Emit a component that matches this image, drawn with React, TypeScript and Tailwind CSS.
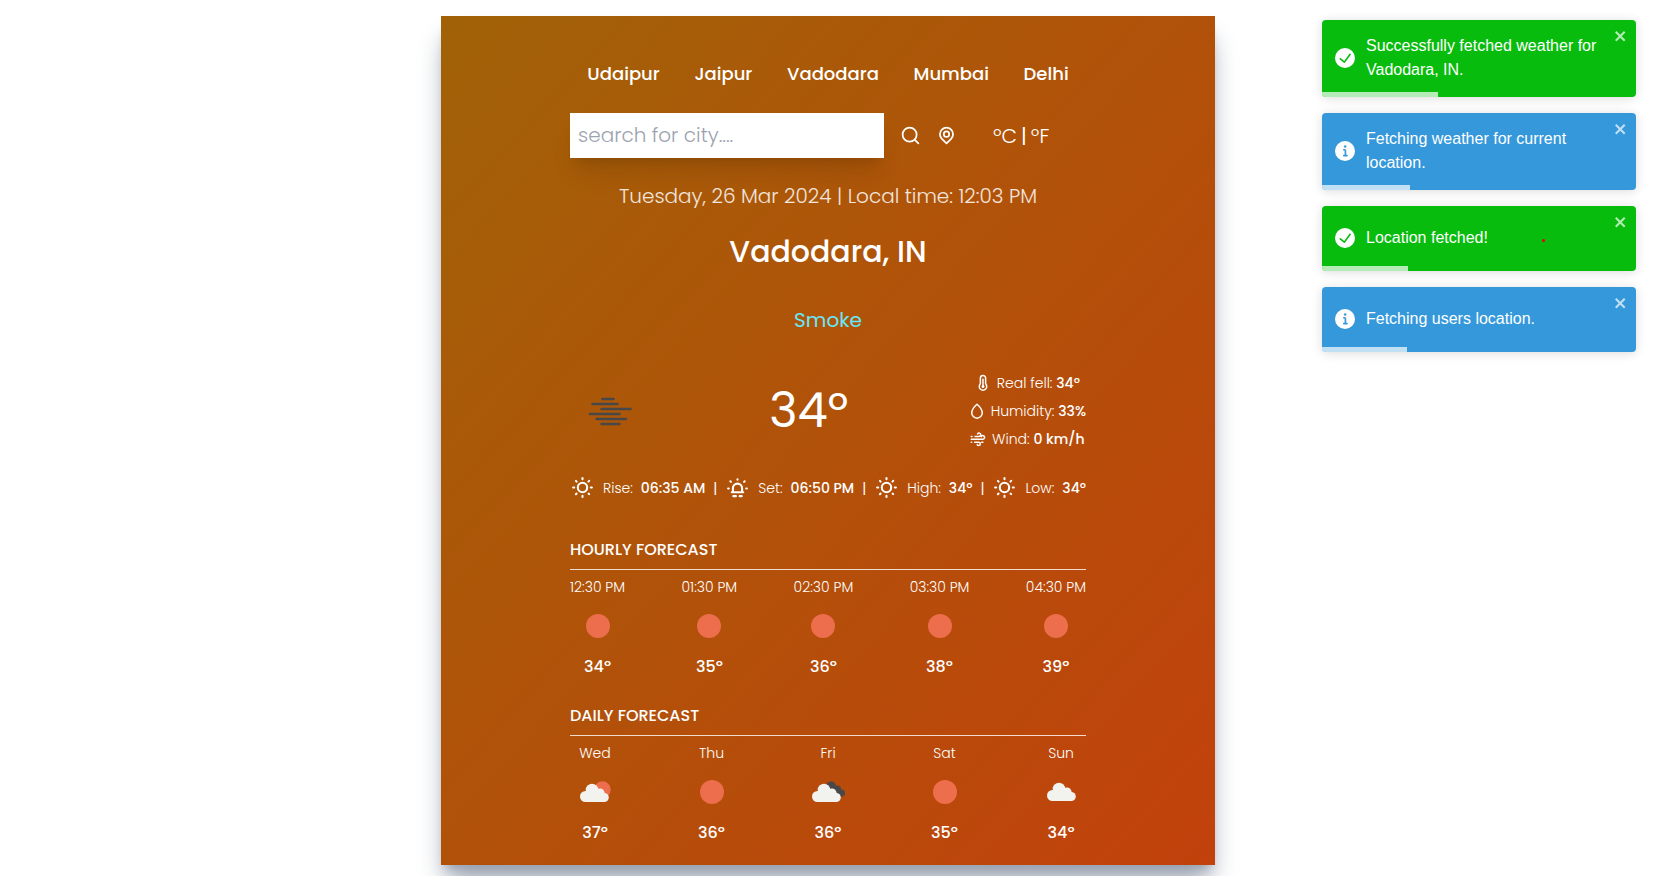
import React from 'react';

const sun =
  'M5.64,17l-.71.71a1,1,0,0,0,0,1.41,1,1,0,0,0,1.41,0l.71-.71A1,1,0,0,0,5.64,17ZM5,12a1,1,0,0,0-1-1H3a1,1,0,0,0,0,2H4A1,1,0,0,0,5,12Zm7-7a1,1,0,0,0,1-1V3a1,1,0,0,0-2,0V4A1,1,0,0,0,12,5ZM5.64,7.05a1,1,0,0,0,.7.29,1,1,0,0,0,.71-.29,1,1,0,0,0,0-1.41l-.71-.71A1,1,0,0,0,4.93,6.34Zm12,.29a1,1,0,0,0,.7-.29l.71-.71a1,1,0,1,0-1.41-1.41L17,5.64a1,1,0,0,0,0,1.41A1,1,0,0,0,17.66,7.34ZM21,11H20a1,1,0,0,0,0,2h1a1,1,0,0,0,0-2Zm-9,8a1,1,0,0,0-1,1v1a1,1,0,0,0,2,0V20A1,1,0,0,0,12,19ZM18.36,17A1,1,0,0,0,17,18.36l.71.71a1,1,0,0,0,1.41,0,1,1,0,0,0,0-1.41ZM12,6.5A5.5,5.5,0,1,0,17.5,12,5.51,5.51,0,0,0,12,6.5Zm0,9A3.5,3.5,0,1,1,15.5,12,3.5,3.5,0,0,1,12,15.5Z';

function SunIcon() {
  return (
    <svg viewBox="0 0 24 24" className="size-[25px] shrink-0" fill="currentColor" aria-hidden="true">
      <path d={sun} />
    </svg>
  );
}

function Line({ className, children }: { className: string; children: React.ReactNode }) {
  return (
    <svg viewBox="0 0 24 24" className={className} fill="none" stroke="currentColor" strokeWidth="2" strokeLinecap="round" strokeLinejoin="round" aria-hidden="true">
      {children}
    </svg>
  );
}

function SunsetIcon() {
  return (
    <Line className="size-[25px] shrink-0">
      <path d="M6.5 16.500h11M7.600 16v-3.300a4.400 4.400 0 0 1 8.800 0V16M12 4v.500M5.100 6l.600.600M18.900 6l-.600.600M3 13h.600M20.400 13h.600M8 20.300h2.500M14 20.300h2" />
    </Line>
  );
}

function CloudShape({ fill }: { fill: string }) {
  return (
    <g fill={fill}>
      <circle cx="5.500" cy="13" r="5.500" />
      <circle cx="12" cy="6.500" r="6.300" />
      <circle cx="20" cy="9.500" r="4.500" />
      <circle cx="24.300" cy="14" r="4.500" />
      <rect x="5" y="9" width="19.500" height="9.500" />
    </g>
  );
}

type Sky = 'clear' | 'few' | 'scattered' | 'broken';

function SkyIcon({ sky }: { sky: Sky }) {
  return (
    <svg viewBox="0 0 50 50" className="my-1 size-[50px]" aria-hidden="true">
      {sky === 'clear' && <circle cx="25" cy="25" r="12" fill="#ec6e4c" />}
      {sky === 'few' && (
        <>
          <circle cx="32.500" cy="22.500" r="8.300" fill="#ec6e4c" />
          <g transform="translate(10 16.500)"><CloudShape fill="#f2f2ee" /></g>
        </>
      )}
      {sky === 'scattered' && <g transform="translate(11 15.500)"><CloudShape fill="#f2f2ee" /></g>}
      {sky === 'broken' && (
        <>
          <g fill="#484848">
            <circle cx="28" cy="19.500" r="5" />
            <circle cx="34.500" cy="22" r="3.500" />
            <circle cx="38.500" cy="26" r="3.500" />
            <path d="M28 20l8.500 2v7.500H28z" />
          </g>
          <g transform="translate(9 16.500)"><CloudShape fill="#f2f2ee" /></g>
        </>
      )}
    </svg>
  );
}

const cities = ['Udaipur', 'Jaipur', 'Vadodara', 'Mumbai', 'Delhi'];

interface Entry { time: string; sky: Sky; temp: number }

const hourly: Entry[] = [
  { time: '12:30 PM', sky: 'clear', temp: 34 },
  { time: '01:30 PM', sky: 'clear', temp: 35 },
  { time: '02:30 PM', sky: 'clear', temp: 36 },
  { time: '03:30 PM', sky: 'clear', temp: 38 },
  { time: '04:30 PM', sky: 'clear', temp: 39 },
];

const daily: Entry[] = [
  { time: 'Wed', sky: 'few', temp: 37 },
  { time: 'Thu', sky: 'clear', temp: 36 },
  { time: 'Fri', sky: 'broken', temp: 36 },
  { time: 'Sat', sky: 'clear', temp: 35 },
  { time: 'Sun', sky: 'scattered', temp: 34 },
];

function Forecast({ title, items }: { title: string; items: Entry[] }) {
  return (
    <section className="mt-[25px]">
      <h2 className="text-base leading-6 font-medium uppercase">{title}</h2>
      <hr className="my-[7px] border-white/80" />
      <ul className="flex items-center justify-between">
        {items.map((item) => (
          <li key={item.time} className="flex flex-col items-center">
            <span className="text-sm leading-5 font-light">{item.time}</span>
            <SkyIcon sky={item.sky} />
            <span className="text-base leading-6 font-medium">{item.temp}º</span>
          </li>
        ))}
      </ul>
    </section>
  );
}

const toasts = [
  { kind: 'success', text: 'Successfully fetched weather for Vadodara, IN.', left: 37, dot: false },
  { kind: 'info', text: 'Fetching weather for current location.', left: 28, dot: false },
  { kind: 'success', text: 'Location fetched!', left: 27.5, dot: true },
  { kind: 'info', text: 'Fetching users location.', left: 27, dot: false },
];

function Toasts() {
  return (
    <div className="absolute top-5 right-5 flex w-[314px] flex-col gap-4 font-['Liberation_Sans',Arial,sans-serif] text-base leading-6 text-white">
      {toasts.map((t) => (
        <div
          key={t.text}
          role="alert"
          className={`relative flex min-h-[65px] items-center overflow-hidden rounded pt-[14px] pr-8 pb-[15px] pl-[13px] shadow-[0_1px_10px_rgba(0,0,0,0.1),0_2px_15px_rgba(0,0,0,0.05)] ${t.kind === 'success' ? 'bg-[#07bc0c]' : 'bg-[#3498db]'}`}
        >
          <svg viewBox="0 0 24 24" className="mr-[11px] size-5 shrink-0 fill-white" aria-hidden="true">
            {t.kind === 'success' ? (
              <path d="M12 0a12 12 0 1012 12A12.014 12.014 0 0012 0zm6.927 8.200l-6.845 9.289a1.011 1.011 0 01-1.430.188l-4.888-3.908a1 1 0 111.250-1.562l4.076 3.261 6.227-8.451a1 1 0 111.610 1.183z" />
            ) : (
              <path d="M12 0a12 12 0 1012 12A12.013 12.013 0 0012 0zm.250 5a1.500 1.500 0 11-1.500 1.500 1.500 1.500 0 011.500-1.500zm2.250 13.500h-4a1 1 0 010-2h.750a.250.250 0 00.250-.250v-4.500a.250.250 0 00-.250-.250h-.750a1 1 0 010-2h1a2 2 0 012 2v4.750a.250.250 0 00.250.250h.750a1 1 0 110 2z" />
            )}
          </svg>
          <p>{t.text}</p>
          {t.dot && <span className="absolute top-1/2 left-[70%] size-[3px] rounded-full bg-red-600" />}
          <button type="button" aria-label="close" className="absolute top-2 right-2 opacity-70">
            <svg viewBox="0 0 14 16" className="h-4 w-[14px] fill-white" aria-hidden="true">
              <path fillRule="evenodd" d="M7.710 8.230l3.750 3.750-1.480 1.480-3.750-3.750-3.750 3.750L1 11.980l3.750-3.750L1 4.480 2.480 3l3.750 3.750L9.980 3l1.480 1.480-3.750 3.750z" />
            </svg>
          </button>
          <div className="absolute bottom-0 left-0 h-[5px] bg-white/70" style={{ width: `${t.left}%` }} />
        </div>
      ))}
    </div>
  );
}

function Stat({ icon, label, value }: { icon: React.ReactNode; label: string; value: string }) {
  return (
    <div className="flex items-center justify-center gap-[5px] text-sm leading-5 font-light">
      {icon}
      <span>{label}: <span className="font-medium">{value}</span></span>
    </div>
  );
}

export default function App() {
  return (
    <div className="relative min-h-screen overflow-hidden bg-white pt-4 pb-3 font-['Poppins','Inter',sans-serif]">
      <main className="mx-auto max-w-[774px] bg-linear-to-br/srgb from-[#a16207] to-[#c2410c] px-[129px] py-5 text-white shadow-xl shadow-gray-400">
        <nav className="mt-6 mb-[25px] flex items-center justify-around">
          {cities.map((c) => (
            <button key={c} type="button" className="text-lg leading-7 font-medium">{c}</button>
          ))}
        </nav>

        <div className="flex items-center">
          <input type="text" aria-label="City" placeholder="search for city...." className="h-[45px] w-[314px] bg-white px-2 pt-1.5 pb-2 text-xl font-light text-gray-700 shadow-xl placeholder:text-[#9ca3af] focus:outline-none" />
          <button type="button" aria-label="Search" className="ml-4">
            <Line className="size-[21px]"><circle cx="11" cy="11" r="8" /><path d="m21 21-4-4" /></Line>
          </button>
          <button type="button" aria-label="Use current location" className="ml-[15px]">
            <Line className="size-[21px]"><path d="M12 21l5.300-5.200a7.500 7.500 0 1 0-10.600 0z" /><circle cx="12" cy="10.500" r="3.100" /></Line>
          </button>
          <div className="ml-9 flex items-center gap-1 text-xl">
            <button type="button" className="font-light">ºC</button>
            <span>|</span>
            <button type="button" className="font-light">ºF</button>
          </div>
        </div>

        <p className="my-6 text-center text-xl leading-7 font-light text-white/85">Tuesday, 26 Mar 2024 | Local time: 12:03 PM</p>
        <h1 className="my-3 text-center text-3xl leading-9 font-medium">Vadodara, IN</h1>
        <p className="pt-6 pb-[25px] text-center text-xl leading-7 text-[#67e8f9]">Smoke</p>

        <div className="flex items-center justify-between py-3">
          <svg viewBox="0 0 80 80" className="size-20" stroke="#484848" strokeWidth="2.500" strokeLinecap="round" aria-hidden="true">
            <path d="M32.500 28h11M22.500 33h25M31.500 38h29M20 43h29.500M26.500 48h29.500M31.500 53h18" />
          </svg>
          <p className="text-5xl leading-none">34º</p>
          <div className="flex flex-col gap-2">
            <Stat icon={<Line className="size-[18px]"><path d="M15.500 13V5.500a3.500 3.500 0 0 0-7 0V13a5 5 0 1 0 7 0zM12 7v9" /><circle cx="12" cy="16.500" r="1" /></Line>} label="Real fell" value="34º" />
            <Stat icon={<Line className="size-[18px]"><path d="M12 3S5 9 5 14.500a7 7 0 0 0 14 0C19 9 12 3 12 3z" /></Line>} label="Humidity" value="33%" />
            <Stat icon={<Line className="size-[18px]"><path d="M3 8.500h1M8 8.500h5.500a2.200 2.200 0 1 0-2-3.200M3 12.300h15.500a2.400 2.400 0 1 0-2.200-3.500M3 16.200h.500M7.500 16.200h5.500a2.200 2.200 0 1 1-2 3.200M17 16.200h1.500" /></Line>} label="Wind" value="0 km/h" />
          </div>
        </div>

        <div className="flex items-center justify-between pt-3 pb-[13px] text-sm leading-5">
          <SunIcon /><span className="font-light">Rise:</span><span className="font-medium">06:35 AM</span><span>|</span>
          <SunsetIcon /><span className="font-light">Set:</span><span className="font-medium">06:50 PM</span><span>|</span>
          <SunIcon /><span className="font-light">High:</span><span className="font-medium">34º</span><span>|</span>
          <SunIcon /><span className="font-light">Low:</span><span className="font-medium">34º</span>
        </div>

        <Forecast title="Hourly forecast" items={hourly} />
        <Forecast title="Daily forecast" items={daily} />
      </main>
      <Toasts />
    </div>
  );
}
